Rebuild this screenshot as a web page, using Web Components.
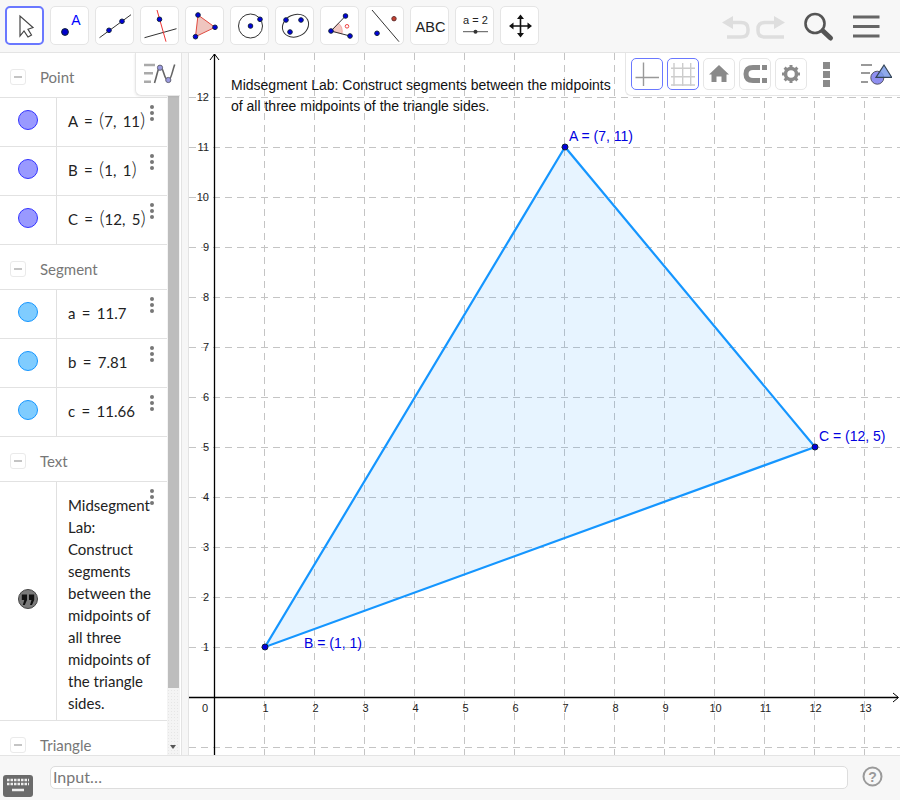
<!DOCTYPE html>
<html>
<head>
<meta charset="utf-8">
<title>Midsegment Lab</title>
<style>
  html, body { margin: 0; padding: 0; background: #fff; overflow: hidden; }
  body { font-family: Lato, sans-serif; }
  .p { font-size: 20px; font-weight: 300; line-height: 0; }
</style>
</head>
<body>
<ggb-app>
  <ggb-toolbar slot="toolbar">
    <ggb-tool active><svg viewBox="0 0 39 39"><path d="M14 10V30L18 25L22 31L25.5 29L22 23.3L27 21.5Z" fill="#fff" stroke="#444" stroke-width="1.2"/></svg></ggb-tool>
    <ggb-tool><svg viewBox="0 0 39 39"><circle cx="14" cy="26" r="3.4" fill="#0000cc" stroke="#123"/><text x="20.2" y="19" font-size="14" fill="#0000ff" font-family="Liberation Sans, sans-serif">A</text></svg></ggb-tool>
    <ggb-tool><svg viewBox="0 0 39 39"><path d="M3.5 31.7L35 8.7" stroke="#333"/><circle cx="13" cy="24.3" r="2.3" fill="#0000dd" stroke="#124"/><circle cx="26" cy="15.3" r="2.3" fill="#0000dd" stroke="#124"/></svg></ggb-tool>
    <ggb-tool><svg viewBox="0 0 39 39"><path d="M3.5 31.7L35.5 22.7" stroke="#333"/><path d="M16 4L25 35.7" stroke="#e33"/><circle cx="18.5" cy="13.3" r="2.3" fill="#0000dd" stroke="#124"/></svg></ggb-tool>
    <ggb-tool><svg viewBox="0 0 39 39"><path d="M12 9L29 21.3L9.5 30.7Z" fill="#efc5bf" stroke="#e04b40"/><circle cx="12" cy="9" r="2.3" fill="#0000dd" stroke="#124"/><circle cx="29" cy="21.3" r="2.3" fill="#0000dd" stroke="#124"/><circle cx="9.5" cy="30.7" r="2.3" fill="#0000dd" stroke="#124"/></svg></ggb-tool>
    <ggb-tool><svg viewBox="0 0 39 39"><circle cx="19.5" cy="20" r="12" fill="none" stroke="#333"/><circle cx="19.5" cy="20" r="2.3" fill="#0000dd" stroke="#124"/><circle cx="29" cy="13.3" r="2.3" fill="#0000dd" stroke="#124"/></svg></ggb-tool>
    <ggb-tool><svg viewBox="0 0 39 39"><ellipse cx="19.5" cy="19.7" rx="13.5" ry="11" transform="rotate(-25 19.5 19.7)" fill="none" stroke="#333"/><circle cx="10" cy="14" r="2.3" fill="#0000dd" stroke="#124"/><circle cx="25" cy="14" r="2.3" fill="#0000dd" stroke="#124"/><circle cx="14" cy="26" r="2.3" fill="#0000dd" stroke="#124"/></svg></ggb-tool>
    <ggb-tool><svg viewBox="0 0 39 39"><path d="M10 25L17.5 17.2A11 11 0 0 1 21 27.8Z" fill="#f2c9c3" stroke="#e88" stroke-width=".6"/><path d="M24.5 10L10 25L29 30" fill="none" stroke="#333"/><circle cx="26" cy="20.3" r="1.8" fill="none" stroke="#e44"/><circle cx="10" cy="25" r="2.3" fill="#0000dd" stroke="#124"/><circle cx="24.5" cy="10" r="2.3" fill="#0000dd" stroke="#124"/><circle cx="29" cy="30" r="2.3" fill="#0000dd" stroke="#124"/></svg></ggb-tool>
    <ggb-tool><svg viewBox="0 0 39 39"><path d="M6 4L33 35.7" stroke="#333"/><circle cx="11" cy="27.3" r="2.3" fill="#0000dd" stroke="#124"/><circle cx="28" cy="12.7" r="2.2" fill="#c6402f" stroke="#633"/></svg></ggb-tool>
    <ggb-tool><svg viewBox="0 0 39 39"><text x="19.5" y="25.5" text-anchor="middle" font-size="14.5" fill="#222" font-family="Liberation Sans, sans-serif">ABC</text></svg></ggb-tool>
    <ggb-tool><svg viewBox="0 0 39 39"><text x="19.5" y="18" text-anchor="middle" font-size="11" fill="#222" font-family="Liberation Sans, sans-serif">a = 2</text><path d="M7 25.7H32" stroke="#555"/><circle cx="19.5" cy="25.7" r="2" fill="#333"/></svg></ggb-tool>
    <ggb-tool><svg viewBox="0 0 39 39"><path d="M19.5 12V28M11.5 20H27.5" stroke="#111" stroke-width="1.6"/><path d="M19.5 8.5L23 13H16ZM19.5 31.5L23 27H16ZM8 20L12.5 16.5V23.5ZM31 20L26.5 16.5V23.5Z" fill="#111"/></svg></ggb-tool>
    <ggb-toolbar-end slot="end"></ggb-toolbar-end>
  </ggb-toolbar>

  <ggb-algebra slot="algebra">
    <ggb-group label="Point"></ggb-group>
    <ggb-row kind="point">A = <span class="p">(</span>7, 11<span class="p">)</span></ggb-row>
    <ggb-row kind="point">B = <span class="p">(</span>1, 1<span class="p">)</span></ggb-row>
    <ggb-row kind="point">C = <span class="p">(</span>12, 5<span class="p">)</span></ggb-row>
    <ggb-group label="Segment"></ggb-group>
    <ggb-row kind="segment">a = 11.7</ggb-row>
    <ggb-row kind="segment">b = 7.81</ggb-row>
    <ggb-row kind="segment">c = 11.66</ggb-row>
    <ggb-group label="Text"></ggb-group>
    <ggb-row kind="text">Midsegment<br>Lab:<br>Construct<br>segments<br>between the<br>midpoints of<br>all three<br>midpoints of<br>the triangle<br>sides.</ggb-row>
    <ggb-group label="Triangle"></ggb-group>
  </ggb-algebra>

  <ggb-graphics slot="graphics">
    <ggb-stylebar></ggb-stylebar>
  </ggb-graphics>

  <ggb-inputbar slot="input"></ggb-inputbar>
</ggb-app>

<script>
function defineEl(name, html, proto) {
  const tpl = document.createElement('template');
  tpl.innerHTML = html;
  customElements.define(name, class extends HTMLElement {
    constructor() {
      super();
      this.attachShadow({ mode: 'open' });
      this.shadowRoot.appendChild(tpl.content.cloneNode(true));
    }
    connectedCallback() {
      if (proto) proto.call(this, this.shadowRoot);
    }
  });
}

defineEl('ggb-app', `
  <style>
    :host { display: flex; flex-direction: column; width: 900px; height: 800px; }
    .main { flex: 1; display: flex; min-height: 0; position: relative; }
    .sizer { width: 8px; flex: none; background: #f6f6f6; border-left: 1px solid #e3e3e3; border-right: 1px solid #e3e3e3; box-sizing: border-box; margin-left: 1px; }
  </style>
  <slot name="toolbar"></slot>
  <div class="main">
    <slot name="algebra"></slot>
    <div class="sizer"></div>
    <slot name="graphics"></slot>
  </div>
  <slot name="input"></slot>
`);

defineEl('ggb-toolbar', `
  <style>
    :host { display: flex; align-items: flex-start; gap: 6px; height: 53px; flex: none; box-sizing: border-box;
      padding: 6px 0 0 5px; background: #f7f7f7; border-bottom: 1px solid #e4e4e4; }
    .end { margin-left: auto; }
  </style>
  <slot></slot>
  <div class="end"><slot name="end"></slot></div>
`);

defineEl('ggb-tool', `
  <style>
    :host { display: block; width: 39px; height: 39px; box-sizing: border-box; border: 1px solid #e5e5e5; border-radius: 5px; background: #fff; flex: none; position: relative; }
    :host([active]) { border: 2px solid #6a78ff; }
    ::slotted(svg) { position: absolute; left: -.5px; top: -1px; width: 39px; height: 39px; }
    :host([active]) ::slotted(svg) { left: -1.5px; top: -2px; }
  </style>
  <slot></slot>
`);

defineEl('ggb-toolbar-end', `
  <style>
    :host { display: block; width: 182px; height: 46px; margin-top: -6px; }
    svg { display: block; }
  </style>
  <svg width="182" height="46" viewBox="718 0 182 46">
    <g fill="none" stroke="#dedede" stroke-width="3.5">
      <path d="M730 22.5H741Q748 22.5 748 29V31Q748 37 741 37H727"/>
      <path d="M776 22.5H765Q758 22.5 758 29V31Q758 37 765 37H784"/>
    </g>
    <path d="M722 22.5L733 16V29Z M785 22.5L774 16V29Z" fill="#dedede"/>
    <circle cx="815" cy="23.5" r="9.5" fill="none" stroke="#555" stroke-width="2.6"/>
    <path d="M823 31L830.5 38" stroke="#555" stroke-width="5" stroke-linecap="round"/>
    <path d="M853 17H879.5M853 26.5H879.5M853 36H879.5" stroke="#666" stroke-width="3"/>
  </svg>
`);

defineEl('ggb-algebra', `
  <style>
    :host { display: block; width: 180px; flex: none; position: relative; overflow: hidden; background: #fff; }
    .list { width: 167px; height: 100%; overflow: hidden; }
    .track { position: absolute; left: 167px; top: 0; bottom: 0; width: 13px;
      background: #f4f4f4 radial-gradient(#e6e6e6 .6px, transparent .7px) 0 0 / 3px 3px; }
    .thumb { position: absolute; left: 1px; right: 1px; top: 0; height: 635px; background: #bdbdbd; }
    .arrow { position: absolute; left: 3px; bottom: 6px; width: 0; height: 0; border: 3.5px solid transparent; border-top: 4px solid #555; border-bottom: 0; }
    .toggle { position: absolute; left: 135px; top: 0; width: 46px; height: 43px; box-sizing: border-box; background: #fff;
      border-left: 1px solid #e6e6e6; border-bottom: 1px solid #e6e6e6; border-bottom-left-radius: 6px; box-shadow: -1px 1px 2px rgba(0,0,0,.05); }
    .toggle svg { display: block; }
  </style>
  <div class="list"><slot></slot></div>
  <div class="track"><div class="thumb"></div><div class="arrow"></div></div>
  <div class="toggle">
    <svg width="45" height="42" viewBox="136 53 45 42">
      <path d="M144 65H155M144 73.300H153M144 81.700H151" stroke="#aaa" stroke-width="2.400"/>
      <path d="M154.500 83C158 72 158 67 160.500 67C163.500 67 164 80.500 168.300 80.500C171 80.500 172 72 174.700 64.500" fill="none" stroke="#666" stroke-width="1.600"/>
      <circle cx="160" cy="67.700" r="2.600" fill="#9a9ae0" stroke="#667"/>
      <circle cx="168.300" cy="80" r="2.600" fill="#9a9ae0" stroke="#667"/>
    </svg>
  </div>
`);

defineEl('ggb-group', `
  <style>
    :host { display: flex; align-items: center; height: 45px; box-sizing: border-box; border-bottom: 1px solid #e2e2e2; padding: 3px 0 0 10px;
      color: #777; font: 15px Lato, sans-serif; }
    .box { width: 16px; height: 16px; box-sizing: border-box; border: 1px solid #eaeaea; border-radius: 3px; display: flex; align-items: center; justify-content: center; margin-right: 14px; }
    .box i { display: block; width: 8px; height: 2px; background: #c4c4c4; }
  </style>
  <div class="box"><i></i></div><span id="t"></span>
`, function (root) { root.getElementById('t').textContent = this.getAttribute('label'); });

defineEl('ggb-row', `
  <style>
    :host { display: flex; box-sizing: border-box; min-height: 49px; border-bottom: 1px solid #e2e2e2; position: relative;
      color: #222; font: 15px/22px Lato, sans-serif; }
    .marble { width: 56px; flex: none; box-sizing: content-box; padding-bottom: 4px; border-right: 1px solid #e0e0e0; display: flex; align-items: center; justify-content: center; }
    .marble svg { display: block; }
    .body { flex: 1; padding: 12px 0 6px 11px; white-space: nowrap; }
    :host([kind="point"]) .body, :host([kind="segment"]) .body { word-spacing: 2.5px; padding-bottom: 0; }
    .dots { position: absolute; left: 150px; top: 7px; width: 4px; height: 16px; display: flex; flex-direction: column; justify-content: space-between; }
    .dots i { display: block; width: 4px; height: 4px; border-radius: 50%; background: #777; }
  </style>
  <div class="marble" id="m"></div>
  <div class="body"><slot></slot></div>
  <div class="dots"><i></i><i></i><i></i></div>
`, function (root) {
  const kind = this.getAttribute('kind');
  const m = root.getElementById('m');
  if (kind === 'text') {
    m.innerHTML = '<svg width="22" height="22" viewBox="0 0 22 22"><circle cx="11" cy="11" r="9.500" fill="#7a7a7a" stroke="#444"/><path d="M4.800 6.500H10V12L7.800 17H5.800L7.300 12H4.800ZM12 6.500H17.200V12L15 17H13L14.500 12H12Z" fill="#111"/></svg>';
  } else {
    const c = kind === 'point' ? ['#9999ff', '#3333ff'] : ['#7fccff', '#1596ff'];
    m.innerHTML = '<svg width="22" height="22" viewBox="0 0 22 22"><circle cx="11" cy="11" r="9.500" fill="' + c[0] + '" stroke="' + c[1] + '"/></svg>';
  }
});

defineEl('ggb-graphics', `
  <style>
    :host { display: block; flex: 1; position: relative; overflow: hidden; background: #fff; font-family: "Liberation Sans", sans-serif; }
    svg { display: block; position: absolute; left: 0; top: 0; }
    text { font-family: "Liberation Sans", sans-serif; }
  </style>
  <svg id="g" width="711" height="702" viewBox="189 53 711 702"></svg>
  <slot></slot>
`, function (root) {
  const ox = 215, oy = 697, u = 50;
  let s = '<g stroke="#c4c4c4" stroke-dasharray="7 5">';
  for (let i = 1; i <= 13; i++) s += `<path d="M${ox + i * u - .5} 53V755"/>`;
  for (let j = -1; j <= 12; j++) if (j) s += `<path d="M189 ${oy - j * u + .5}H900"/>`;
  s += '</g>';
  s += '<path d="M189 697.500H898M214.500 54V755" stroke="#000" stroke-width="1.300"/>';
  s += '<path d="M893 693L898.500 697.500L893 702M210 60L214.500 54L219 60" fill="none" stroke="#000"/>';
  s += '<g font-size="11" fill="#222">';
  for (let i = 1; i <= 13; i++) s += `<text x="${ox + i * u + 1 - .5}" y="712" text-anchor="middle">${i}</text>`;
  for (let j = 1; j <= 12; j++) s += `<text x="209" y="${oy - j * u + 3.5}" text-anchor="end">${j}</text>`;
  s += '<text x="205" y="712" text-anchor="middle">0</text></g>';
  s += '<path d="M565 147L265 647L815 447Z" fill="#1596ff" fill-opacity=".1" stroke="#1596ff" stroke-width="2.200"/>';
  for (const [x, y] of [[565, 147], [265, 647], [815, 447]]) s += `<circle cx="${x}" cy="${y}" r="3" fill="#0000dd" stroke="#123"/>`;
  s += '<g font-size="14" fill="#0000e0"><text x="569" y="141">A = (7, 11)</text><text x="304" y="648">B = (1, 1)</text><text x="819" y="441">C = (12, 5)</text></g>';
  s += '<g font-size="14" fill="#111"><text x="231" y="90">Midsegment Lab: Construct segments between the midpoints</text><text x="231" y="111">of all three midpoints of the triangle sides.</text></g>';
  root.getElementById('g').innerHTML = s;
});

defineEl('ggb-stylebar', `
  <style>
    :host { position: absolute; right: 0; top: 0; width: 275px; height: 43px; box-sizing: border-box; background: #fff;
      border-left: 1px solid #e6e6e6; border-bottom: 1px solid #e6e6e6; border-bottom-left-radius: 6px;
      display: flex; align-items: flex-start; gap: 4px; padding: 5px 0 0 5px; }
    .b { width: 32px; height: 32px; box-sizing: border-box; border: 1px solid #e6e6e6; border-radius: 5px; flex: none; }
    .b.on { border-color: #6a78ff; }
    svg { display: block; }
    .more { width: 7px; margin: 4px 0 0 12px; display: flex; flex-direction: column; gap: 2px; flex: none; }
    .more i { display: block; height: 7px; background: #8a8a8a; }
    .menu { margin: 0 0 0 26px; flex: none; }
  </style>
  <div class="b on"><svg width="30" height="30" viewBox="0 0 30 30"><path d="M11.500 3.500V27M3.500 18.500H27" stroke="#999" stroke-width="1.400"/></svg></div>
  <div class="b on"><svg width="30" height="30" viewBox="0 0 30 30"><path d="M6 4V27M14.700 4V27M22.700 4V27M3 9.300H27M3 17.700H27M3 26H27" stroke="#ccc" stroke-width="1.400"/></svg></div>
  <div class="b"><svg width="30" height="30" viewBox="0 0 30 30"><path d="M15 6L25 15.500H22.500V23H17.500V17.500H12.500V23H7.500V15.500H5Z" fill="#8a8a8a"/></svg></div>
  <div class="b"><svg width="30" height="30" viewBox="0 0 30 30"><path d="M20 8.500H13Q6 8.500 6 15Q6 21.500 13 21.500H20" fill="none" stroke="#8a8a8a" stroke-width="5"/><path d="M22 6H27V11H22ZM22 19H27V24H22Z" fill="#8a8a8a"/></svg></div>
  <div class="b"><svg width="30" height="30" viewBox="0 0 30 30"><circle cx="15" cy="15" r="5.500" fill="none" stroke="#8a8a8a" stroke-width="3.500"/><path d="M15 6V24M6 15H24M8.600 8.600L21.400 21.400M21.400 8.600L8.600 21.400" stroke="#8a8a8a" stroke-width="3" stroke-dasharray="3 12 3 0"/></svg></div>
  <div class="more"><i></i><i></i><i></i></div>
  <svg class="menu" width="32" height="32" viewBox="0 0 32 32">
    <path d="M1 7H12M1 15H10M1 24H8" stroke="#999" stroke-width="2"/>
    <circle cx="17.300" cy="19.700" r="6.500" fill="#8f8ff0" stroke="#556"/>
    <path d="M24 7L16 19.300H31.700Z" fill="#7b9be8" fill-opacity=".85" stroke="#345" stroke-width="1.200"/>
  </svg>
`);

defineEl('ggb-inputbar', `
  <style>
    :host { display: flex; align-items: flex-start; height: 45px; flex: none; box-sizing: border-box; background: #f7f7f7; border-top: 1px solid #e4e4e4; position: relative; }
    .kb { position: absolute; left: 3px; top: 19px; }
    .field { position: absolute; left: 50px; top: 10px; width: 798px; height: 23px; box-sizing: border-box; background: #fff; border: 1px solid #ddd; border-radius: 5px;
      color: #777; font: 16px/20px Lato, sans-serif; padding-left: 2px; }
    .help { position: absolute; left: 862px; top: 10px; }
    svg { display: block; }
  </style>
  <svg class="kb" width="30" height="23" viewBox="0 0 30 23">
    <rect width="30" height="22" rx="3" fill="#6b6b6b"/>
    <path d="M4 5H26M4 9H26" stroke="#eee" stroke-width="2.500" stroke-dasharray="2.500 1"/>
    <path d="M9 15H21" stroke="#eee" stroke-width="2.500"/>
  </svg>
  <div class="field">Input…</div>
  <svg class="help" width="21" height="21" viewBox="0 0 21 21">
    <circle cx="10.500" cy="10.500" r="9" fill="none" stroke="#9a9a9a" stroke-width="2"/>
    <text x="10.500" y="15.500" text-anchor="middle" font-size="14" font-weight="bold" fill="#9a9a9a" font-family="Liberation Sans, sans-serif">?</text>
  </svg>
`);
</script>
</body>
</html>
